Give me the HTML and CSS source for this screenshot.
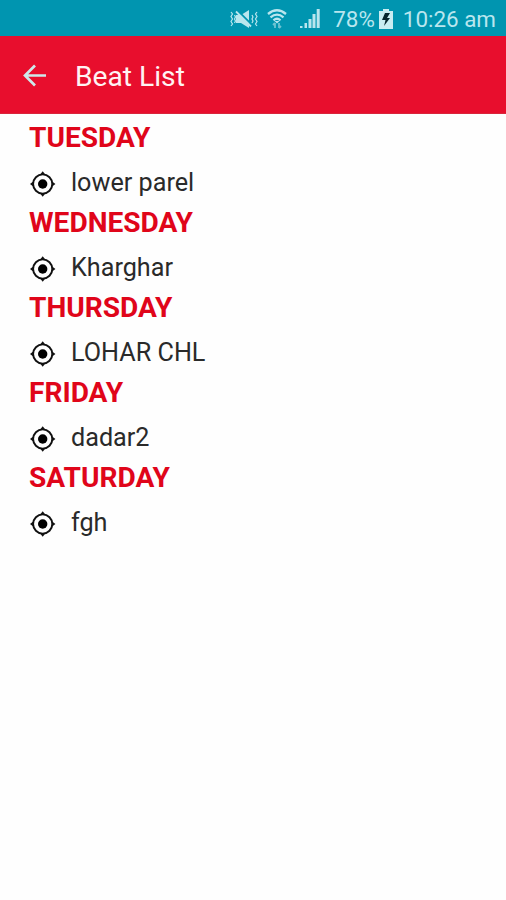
FILE: index.html
```html
<!DOCTYPE html>
<html lang="en">
<head>
    <meta charset="utf-8">
    <title>Beat List</title>
    <link rel="stylesheet" href="styles.css">
</head>

<body>
    <!-- icon shared by all the beats -->
    <svg class="defs" width="0" height="0">
        <symbol id="target" viewBox="0 0 26 26">
            <circle cx="12.700" cy="13" r="9.6" fill="none" stroke="#111" stroke-width="1.9"/>
            <circle cx="12.700" cy="13" r="4.7" fill="#000"/>
            <path d="M12.700 0.300L15.500 3.800H9.900ZM12.700 25.700L15.500 22.200H9.900ZM0 13L3.500 10.200V15.800ZM25.400 13L21.900 10.200V15.800Z" fill="#111"/>
        </symbol>
    </svg>

    <!-- STATUS BAR -->
    <div class="status">
        <svg class="mute" width="28" height="20" viewBox="0 0 28 20">
            <path d="M6 6H11L19 1V19L11 14H6Z" fill="#b9e6ee"/>
            <path d="M7 1L22 16" stroke="#0095b0" stroke-width="2"/>
            <path d="M6 2.500L21 17.500" stroke="#b9e6ee" stroke-width="1.800"/>
            <path d="M1 3L2.500 5L1 7.500L2.500 10L1 12.500L2.500 15L1 17M4.500 6L5.500 8L4.500 10L5.500 12L4.500 14M27 3L25.500 5L27 7.500L25.500 10L27 12.500L25.500 15L27 17M22 6L23 8L22 10L23 12L22 14" fill="none" stroke="#b9e6ee" stroke-width="1.2"/>
        </svg>
        <svg class="wifi" width="20" height="20" viewBox="0 0 20 20">
            <path d="M1 5Q10 -2.500 19 5M3.500 8.300Q10 3 16.500 8.300M6.500 11.300Q10 8.300 13.500 11.300" fill="none" stroke="#b9e6ee" stroke-width="2.300"/>
            <path d="M7.500 12H12.500L10 14.500Z" fill="#b9e6ee"/>
            <path d="M8 19V14M6 16L8 14M12 14V19M14 17L12 19" fill="none" stroke="#6fc3d2" stroke-width="1.8"/>
        </svg>
        <svg class="signal" width="20" height="19" viewBox="0 0 20 19">
            <path d="M0 19V17H2.500V19ZM4.500 19V14H7V19ZM8.500 19V10H11.500V19ZM12.500 19V5H15.500V19ZM16.700 19V0H19.700V19Z" fill="#b9e6ee"/>
        </svg>
        <span class="percent">78%</span>
        <svg class="battery" width="14" height="20" viewBox="0 0 14 20">
            <path d="M4 0H10V2H14V20H0V2H4Z" fill="#c9edf2"/>
            <path d="M6 4L11 4L8 9H11L5 17L6.500 11H3Z" fill="#06262e"/>
        </svg>
        <span class="clock">10:26 am</span>
    </div>

    <!-- TITLE BAR -->
    <div class="header">
        <svg width="24" height="23" viewBox="0 0 24 23">
            <path d="M23 11.500H2.500M12 1.500L2 11.500L12 21.500" fill="none" stroke="#cdeaeb" stroke-width="2.700"/>
        </svg>
        <h1>Beat List</h1>
    </div>

    <!-- BEATS BY DAY -->
    <div class="list">
        <h2>TUESDAY</h2>
        <p><svg><use href="#target"/></svg><span>lower parel</span></p>
        <h2>WEDNESDAY</h2>
        <p><svg><use href="#target"/></svg><span>Kharghar</span></p>
        <h2>THURSDAY</h2>
        <p><svg><use href="#target"/></svg><span>LOHAR CHL</span></p>
        <h2>FRIDAY</h2>
        <p><svg><use href="#target"/></svg><span>dadar2</span></p>
        <h2>SATURDAY</h2>
        <p><svg><use href="#target"/></svg><span>fgh</span></p>
    </div>
</body>
</html>
```
FILE: styles.css
```css
html, body {
    margin:0;
    padding:0;
    background-color:#fefefe;
    font-family:Roboto, sans-serif;
}
.defs {display:block;}

/*** status bar ***/
.status {
    display:flex;
    align-items:center;
    justify-content:flex-end;
    box-sizing:border-box;
    height:36px;
    padding:1px 10px 0 0;
    background-color:#0095b0;
    color:#b9e6ee;
    font-size:22.4px;
    line-height:34px;
    white-space:nowrap;
}
.mute {margin-right:9px;}
.wifi {margin-right:13px;}
.signal {margin-right:13px;}
.battery {margin:0 10px 0 4px;}

/*** title bar ***/
.header {
    display:flex;
    align-items:center;
    box-sizing:border-box;
    height:78px;
    padding:1px 0 0 23px;
    background-color:#e80e2d;
    border-bottom:1px solid #d9253b;
}
.header h1 {
    margin:3px 0 0 28px;
    color:#fff3f3;
    font-size:28.2px;
    font-weight:400;
    line-height:36px;
}

/*** list of days ***/
.list {padding:4px 29px 0;}
.list h2 {
    margin:0;
    color:#e0051a;
    font-size:28.1px;
    font-weight:700;
    line-height:40.1px;
}
.list p {
    display:flex;
    align-items:center;
    height:45px;
    margin:0;
    color:#2a2a2a;
    font-size:25.2px;
    line-height:45px;
}
.list svg {
    width:26px;
    height:26px;
    margin:7px 15px 0 1px;
}
.list span {padding-top:3px;}
```
